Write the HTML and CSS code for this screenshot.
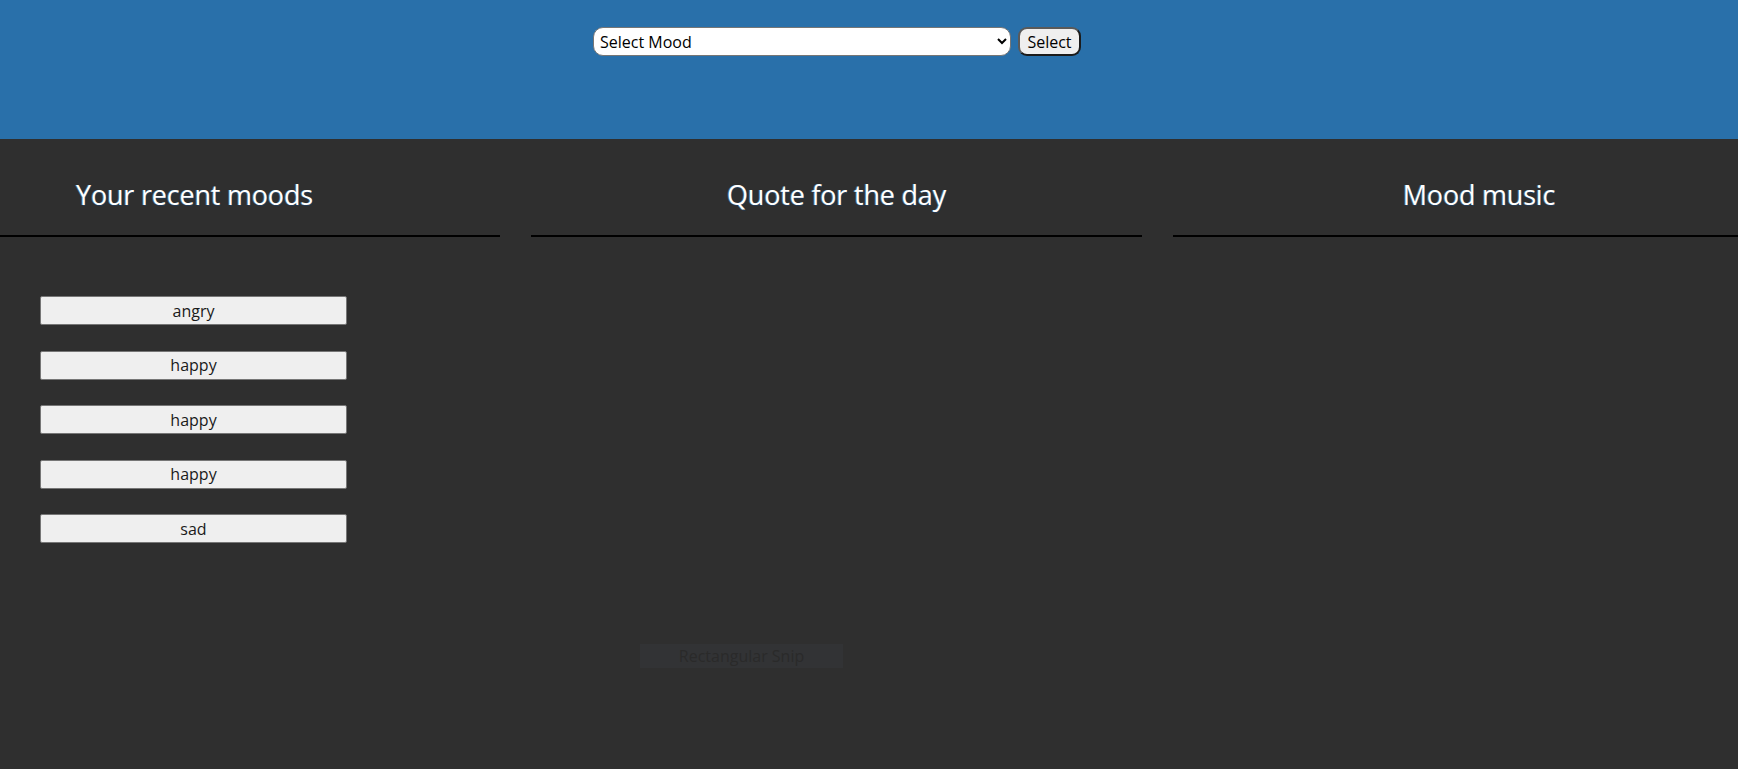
FILE: index.html
```html
<!DOCTYPE html>
<html lang="en">
<head>
<meta charset="utf-8">
<title>Mood</title>
<link rel="stylesheet" href="styles.css">
</head>
<body>
<header class="topbar">
  <form class="mood-form">
    <select class="mood-select">
      <option>Select Mood</option>
      <option>happy</option>
      <option>sad</option>
      <option>angry</option>
    </select>
    <button type="button" class="select-btn">Select</button>
  </form>
</header>
<main class="columns">
  <section class="col col-left">
    <h2 class="col-title title-left">Your recent moods</h2>
    <div class="mood-list">
      <button type="button" class="mood-item">angry</button>
      <button type="button" class="mood-item">happy</button>
      <button type="button" class="mood-item">happy</button>
      <button type="button" class="mood-item">happy</button>
      <button type="button" class="mood-item">sad</button>
    </div>
  </section>
  <section class="col">
    <h2 class="col-title">Quote for the day</h2>
  </section>
  <section class="col">
    <h2 class="col-title">Mood music</h2>
  </section>
</main>
<div class="snip">Rectangular Snip</div>
</body>
</html>
```

FILE: styles.css
```css
html, body {
  margin: 0;
  padding: 0;
}
body {
  background: #2f2f2f;
  font-family: "Open Sans", "Noto Sans", sans-serif;
  overflow: hidden;
  height: 769px;
  position: relative;
}
.topbar {
  background: #2970aa;
  height: 139px;
  box-sizing: border-box;
  padding-top: 27px;
  display: flex;
  justify-content: center;
}
.mood-form {
  display: flex;
  gap: 7px;
  height: 29px;
  margin-left: -64px;
}
.mood-select {
  width: 418px;
  height: 29px;
  border-radius: 10px;
  border: 1px solid #767676;
  background: #fff;
  font-family: "Open Sans", sans-serif;
  font-size: 16px;
  color: #000;
  padding: 0 2px;
}
.select-btn {
  width: 63px;
  height: 29px;
  border-radius: 9px;
  border: 2px solid #1b1b1b;
  border-top-color: #5a5a5a;
  border-left-color: #5a5a5a;
  background: #efefef;
  font-family: "Open Sans", sans-serif;
  font-size: 16px;
  color: #000;
  padding: 0;
}
.columns {
  display: grid;
  grid-template-columns: 612px 611px 612px;
  column-gap: 31px;
  margin-left: -112px;
  width: 1897px;
}
.col-title {
  margin: 37px 0 0;
  padding-bottom: 21px;
  border-bottom: 2px solid #000;
  font-size: 27px;
  line-height: 38px;
  font-weight: 400;
  color: #fff;
  text-align: center;
  text-shadow: 1px 1px 0 #223a55, -1px 0 0 rgba(120, 220, 255, 0.35);
  letter-spacing: -0.2px;
}
.title-left {
  text-align: left;
  padding-left: 188px;
}
.mood-list {
  display: flex;
  flex-direction: column;
  gap: 25.5px;
  padding: 59px 0 0 152px;
}
.mood-item {
  width: 307px;
  height: 29px;
  background: #efefef;
  border: 1px solid #767676;
  border-radius: 2px;
  font-family: "Open Sans", sans-serif;
  font-size: 16px;
  color: #1a1a1a;
  padding: 0;
}
.snip {
  position: absolute;
  left: 640px;
  top: 644px;
  width: 203px;
  height: 24px;
  background: #323335;
  color: #2a2a2a;
  font-size: 16px;
  line-height: 24px;
  text-align: center;
}
```
